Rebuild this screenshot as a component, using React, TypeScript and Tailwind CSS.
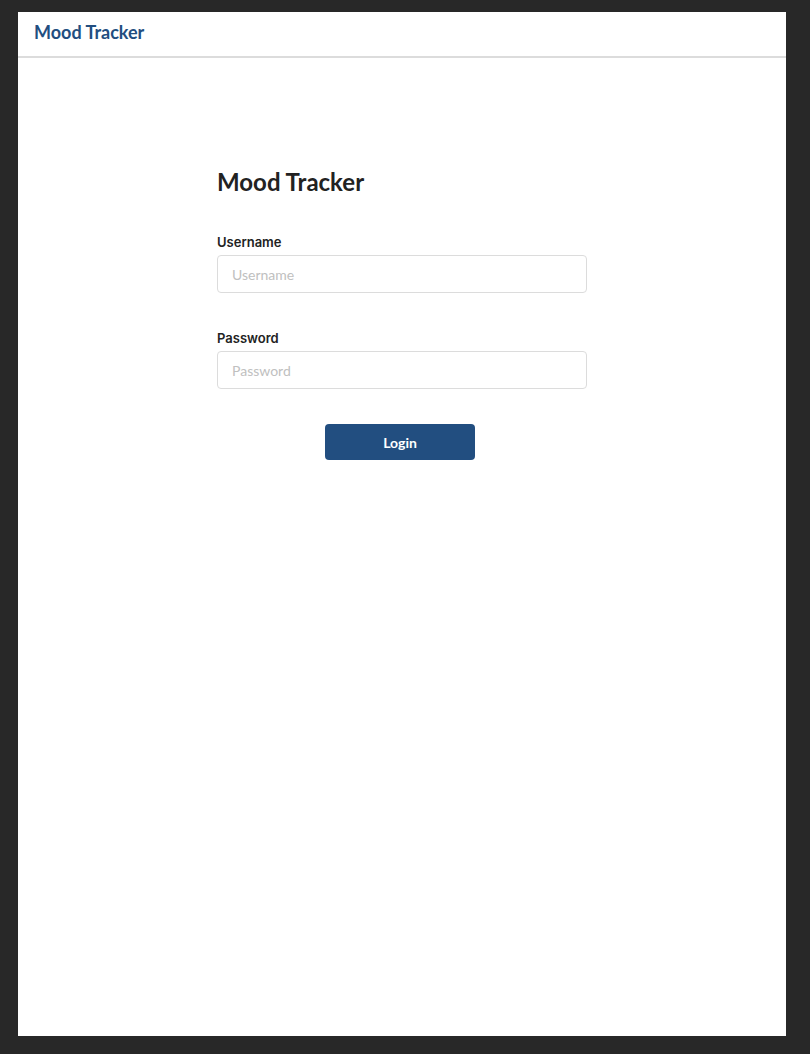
const App = () => {
    return (
        <div className="min-h-screen bg-[#282828] px-[18px] pt-[12px] pb-[18px] font-['Lato',sans-serif]">
            <div className="h-[1024px] w-[768px] bg-white flex flex-col">
                <header className="h-[46px] border-b-2 border-[#dcdcdc] flex items-center px-4 pb-[4px]">
                    <span className="text-[18px] font-bold text-[#224e80]">Mood Tracker</span>
                </header>
                <main className="flex justify-center">
                    <form className="w-[370px] mt-[109px] flex flex-col" onSubmit={(e) => e.preventDefault()}>
                        <h1 className="text-[24px] font-bold text-[#222] leading-[30px] mb-[37px]">Mood Tracker</h1>
                        <label className="text-[13px] font-semibold text-[#222] font-['Inter',sans-serif] leading-[16px] mb-[5px]">
                            Username
                        </label>
                        <input
                            type="text"
                            placeholder="Username"
                            className="h-[38px] border border-[#dcdcdc] rounded-[4px] px-[14px] text-[14px] placeholder:text-[#c0c0c0] outline-none"
                        />
                        <label className="mt-[37px] text-[13px] font-semibold text-[#222] font-['Inter',sans-serif] leading-[16px] mb-[5px]">
                            Password
                        </label>
                        <input
                            type="password"
                            placeholder="Password"
                            className="h-[38px] border border-[#dcdcdc] rounded-[4px] px-[14px] text-[14px] placeholder:text-[#c0c0c0] outline-none"
                        />
                        <div className="flex mt-[35px] pl-[108px]">
                            <button
                                type="submit"
                                className="w-[150px] h-[36px] bg-[#224e80] rounded-[4px] text-white text-[14px] font-bold"
                            >
                                Login
                            </button>
                        </div>
                    </form>
                </main>
            </div>
        </div>
    )
}

export default App
